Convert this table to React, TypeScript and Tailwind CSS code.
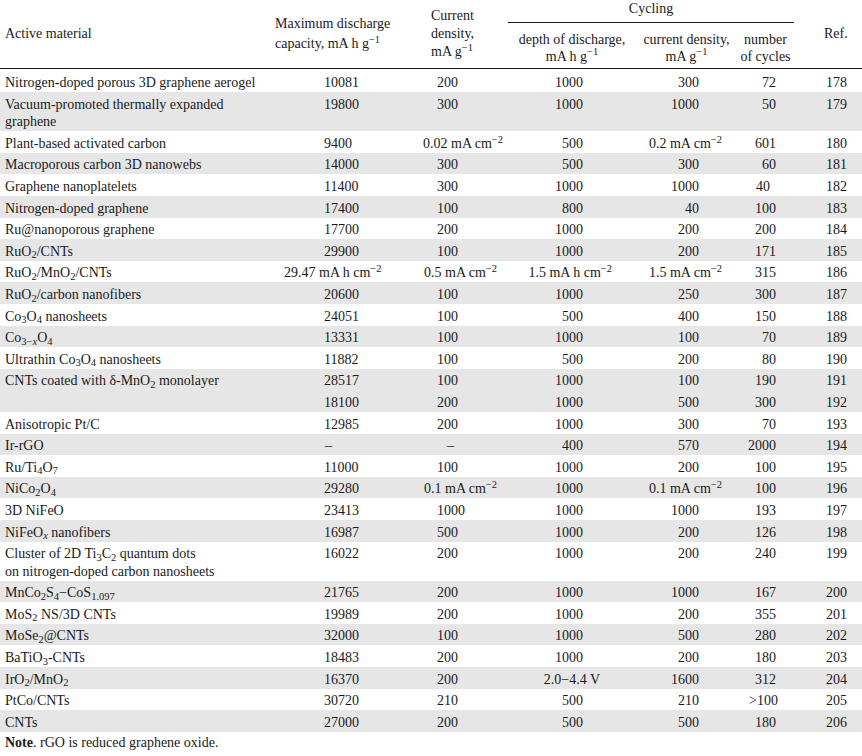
import React from "react";

type Row = {
  mat: React.ReactNode;
  v: React.ReactNode[];
  grey: boolean;
  ov?: Record<number, string>;
};

const cm2 = (n: string) => (
  <>
    {n} mA cm<sup>−2</sup>
  </>
);

const rows: Row[] = [
  { mat: "Nitrogen-doped porous 3D graphene aerogel", v: ["10081", "200", "1000", "300", "72", "178"], grey: false },
  {
    mat: (
      <>
        Vacuum-promoted thermally expanded
        <br />
        graphene
      </>
    ),
    v: ["19800", "300", "1000", "1000", "50", "179"],
    grey: true,
  },
  {
    mat: "Plant-based activated carbon",
    v: ["9400", cm2("0.02"), "500", cm2("0.2"), "601", "180"],
    grey: false,
    ov: { 1: "pl-[3px]", 3: "text-right pr-[15px]" },
  },
  { mat: "Macroporous carbon 3D nanowebs", v: ["14000", "300", "500", "300", "60", "181"], grey: true },
  { mat: "Graphene nanoplatelets", v: ["11400", "300", "1000", "1000", "40", "182"], grey: false, ov: { 4: "text-right pr-[24px]" } },
  { mat: "Nitrogen-doped graphene", v: ["17400", "100", "800", "40", "100", "183"], grey: true },
  { mat: "Ru@nanoporous graphene", v: ["17700", "200", "1000", "200", "200", "184"], grey: false },
  {
    mat: (
      <>
        RuO<sub>2</sub>/CNTs
      </>
    ),
    v: ["29900", "100", "1000", "200", "171", "185"],
    grey: true,
  },
  {
    mat: (
      <>
        RuO<sub>2</sub>/MnO<sub>2</sub>/CNTs
      </>
    ),
    v: [
      <>
        29.47 mA h cm<sup>−2</sup>
      </>,
      cm2("0.5"),
      <>
        1.5 mA h cm<sup>−2</sup>
      </>,
      cm2("1.5"),
      "315",
      "186",
    ],
    grey: false,
    ov: { 0: "pl-[12px]", 1: "pl-[4px]", 2: "text-right pr-[24px]", 3: "text-right pr-[15px]" },
  },
  {
    mat: (
      <>
        RuO<sub>2</sub>/carbon nanofibers
      </>
    ),
    v: ["20600", "100", "1000", "250", "300", "187"],
    grey: true,
  },
  {
    mat: (
      <>
        Co<sub>3</sub>O<sub>4</sub> nanosheets
      </>
    ),
    v: ["24051", "100", "500", "400", "150", "188"],
    grey: false,
  },
  {
    mat: (
      <>
        Co
        <sub>
          3−<i>x</i>
        </sub>
        O<sub>4</sub>
      </>
    ),
    v: ["13331", "100", "1000", "100", "70", "189"],
    grey: true,
  },
  {
    mat: (
      <>
        Ultrathin Co<sub>3</sub>O<sub>4</sub> nanosheets
      </>
    ),
    v: ["11882", "100", "500", "200", "80", "190"],
    grey: false,
  },
  {
    mat: (
      <>
        CNTs coated with δ-MnO<sub>2</sub> monolayer
      </>
    ),
    v: ["28517", "100", "1000", "100", "190", "191"],
    grey: true,
  },
  { mat: "", v: ["18100", "200", "1000", "500", "300", "192"], grey: true },
  { mat: "Anisotropic Pt/C", v: ["12985", "200", "1000", "300", "70", "193"], grey: false },
  {
    mat: "Ir-rGO",
    v: ["–", "–", "400", "570", "2000", "194"],
    grey: true,
    ov: { 0: "pl-[53px]", 1: "pl-[27px]" },
  },
  {
    mat: (
      <>
        Ru/Ti<sub>4</sub>O<sub>7</sub>
      </>
    ),
    v: ["11000", "100", "1000", "200", "100", "195"],
    grey: false,
  },
  {
    mat: (
      <>
        NiCo<sub>2</sub>O<sub>4</sub>
      </>
    ),
    v: ["29280", cm2("0.1"), "1000", cm2("0.1"), "100", "196"],
    grey: true,
    ov: { 1: "pl-[4px]", 3: "text-right pr-[15px]" },
  },
  { mat: "3D NiFeO", v: ["23413", "1000", "1000", "1000", "193", "197"], grey: false },
  {
    mat: (
      <>
        NiFeO
        <sub>
          <i>x</i>
        </sub>{" "}
        nanofibers
      </>
    ),
    v: ["16987", "500", "1000", "200", "126", "198"],
    grey: true,
  },
  {
    mat: (
      <>
        Cluster of 2D Ti<sub>3</sub>C<sub>2</sub> quantum dots
        <br />
        on nitrogen-doped carbon nanosheets
      </>
    ),
    v: ["16022", "200", "1000", "200", "240", "199"],
    grey: false,
  },
  {
    mat: (
      <>
        MnCo<sub>2</sub>S<sub>4</sub>−CoS<sub>1.097</sub>
      </>
    ),
    v: ["21765", "200", "1000", "1000", "167", "200"],
    grey: true,
  },
  {
    mat: (
      <>
        MoS<sub>2</sub> NS/3D CNTs
      </>
    ),
    v: ["19989", "200", "1000", "200", "355", "201"],
    grey: false,
  },
  {
    mat: (
      <>
        MoSe<sub>2</sub>@CNTs
      </>
    ),
    v: ["32000", "100", "1000", "500", "280", "202"],
    grey: true,
  },
  {
    mat: (
      <>
        BaTiO<sub>3</sub>-CNTs
      </>
    ),
    v: ["18483", "200", "1000", "200", "180", "203"],
    grey: false,
  },
  {
    mat: (
      <>
        IrO<sub>2</sub>/MnO<sub>2</sub>
      </>
    ),
    v: ["16370", "200", "2.0−4.4 V", "1600", "312", "204"],
    grey: true,
    ov: { 2: "text-right pr-[36px]" },
  },
  {
    mat: "PtCo/CNTs",
    v: ["30720", "210", "500", "210", ">100", "205"],
    grey: false,
    ov: { 4: "text-right pr-[16px]" },
  },
  { mat: "CNTs", v: ["27000", "200", "500", "500", "180", "206"], grey: true },
];

const defaults = [
  "pl-[52px]",
  "pl-[17px]",
  "text-right pr-[53px]",
  "text-right pr-[38px]",
  "text-right pr-[18px]",
  "text-right pr-[15px]",
];

const GRID = "grid grid-cols-[272px_148px_88px_128px_101px_57px_68px]";

export default function App() {
  return (
    <div
      className="w-[862px] h-[756px] bg-white text-[#1a1a1a] text-[14px] overflow-hidden"
      style={{ fontFamily: '"Liberation Serif", "Times New Roman", serif' }}
    >
      {/* Header */}
      <div className={GRID + " grid-rows-[23px_44.5px] border-b-[1.5px] border-[#1a1a1a]"}>
        <div className="row-span-2 flex items-center pl-[5px]">Active material</div>
        <div className="row-span-2 flex items-center pl-[3px] leading-[19.5px]">
          <div>
            Maximum discharge
            <br />
            capacity, mA h g<sup>−1</sup>
          </div>
        </div>
        <div className="row-span-2 flex items-center pl-[11px] leading-[18px]">
          <div>
            Current
            <br />
            density,
            <br />
            mA g<sup>−1</sup>
          </div>
        </div>
        <div className="col-span-3 text-center leading-[18px] border-b border-[#1a1a1a]">Cycling</div>
        <div className="row-span-2 flex items-center pl-[30px]">Ref.</div>
        <div className="text-center leading-[17px] pt-[7.5px] whitespace-nowrap">
          depth of discharge,
          <br />
          mA h g<sup>−1</sup>
        </div>
        <div className="text-center leading-[17px] pt-[7.5px] whitespace-nowrap">
          current density,
          <br />
          mA g<sup>−1</sup>
        </div>
        <div className="text-center leading-[17px] pt-[7.5px] whitespace-nowrap">
          number
          <br />
          of cycles
        </div>
      </div>

      {/* Body */}
      <div className="mt-[2.2px]">
        {rows.map((r, i) => (
          <div
            key={i}
            className={GRID + " leading-[17.4px] pt-[3.6px] pb-[0.6px] " + (r.grey ? "bg-[#e6e6e6]" : "")}
          >
            <div className="pl-[5px] whitespace-nowrap">{r.mat}</div>
            {r.v.map((val, j) => (
              <div key={j} className={"whitespace-nowrap " + (r.ov && r.ov[j] ? r.ov[j] : defaults[j])}>
                {val}
              </div>
            ))}
          </div>
        ))}
      </div>

      <div className="pl-[5px] leading-[18px] pt-[2.6px]">
        <b>Note</b>. rGO is reduced graphene oxide.
      </div>
    </div>
  );
}
